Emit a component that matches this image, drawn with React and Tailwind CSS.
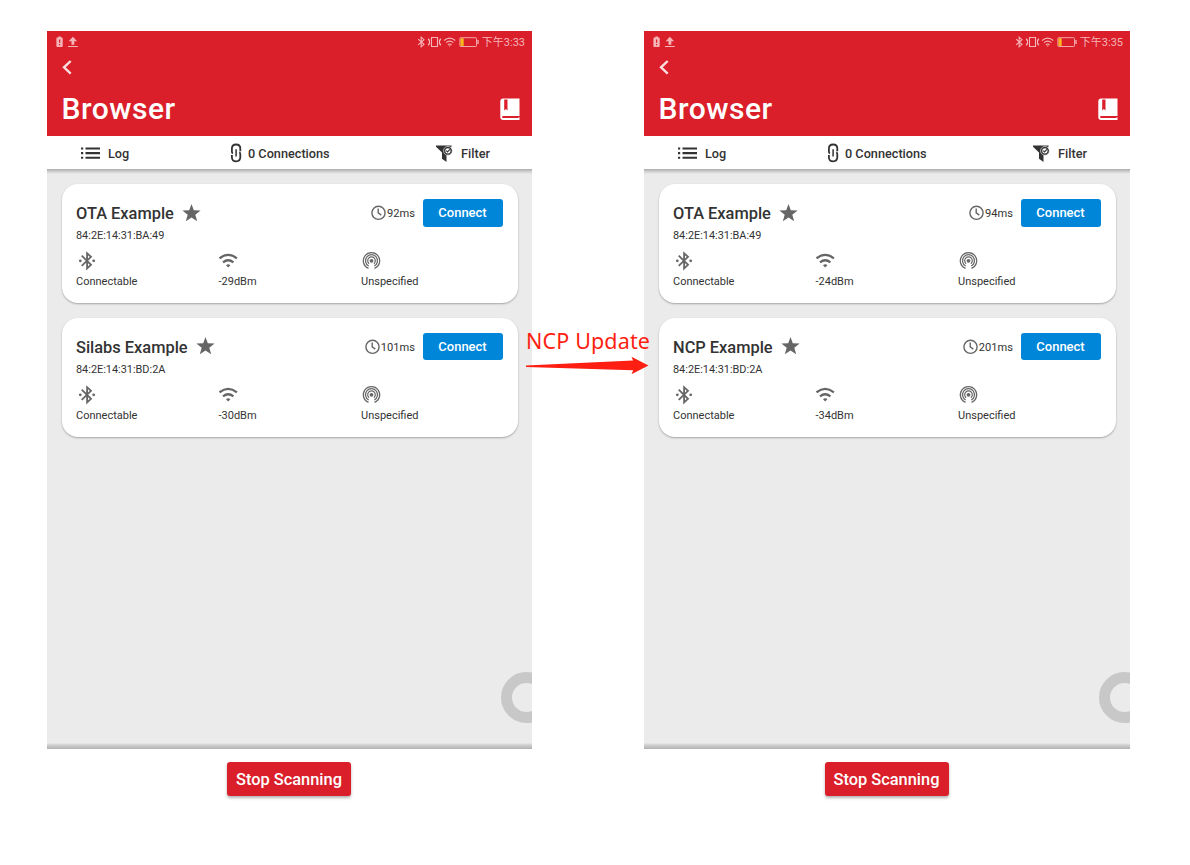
const phones = [
  {
    time: "下午3:33",
    width: "w-[485px]",
    devices: [
      { name: "OTA Example", mac: "84:2E:14:31:BA:49", rssi: "-29dBm", interval: "92ms" },
      { name: "Silabs Example", mac: "84:2E:14:31:BD:2A", rssi: "-30dBm", interval: "101ms" },
    ],
  },
  {
    time: "下午3:35",
    width: "w-[486px]",
    devices: [
      { name: "OTA Example", mac: "84:2E:14:31:BA:49", rssi: "-24dBm", interval: "94ms" },
      { name: "NCP Example", mac: "84:2E:14:31:BD:2A", rssi: "-34dBm", interval: "201ms" },
    ],
  },
];

function StatusBar({ time }) {
  return (
    <div className="flex h-[22px] items-center justify-between pl-[9px] pr-[7px] text-[#f5b5b8]">
      <svg width="24" height="12" viewBox="0 0 24 12" fill="currentColor">
        <path fillRule="evenodd" d="M1.300 1.500h1V.5h2.600v1h.9q.9 0 .9.900v7.600q0 .9-.9.900H1.300q-.9 0-.9-.900V2.400q0-.9.900-.9zM3 3.400v3.400h1.200V3.400zm0 4.500v1.300h1.200V7.900z" />
        <path d="M16.900.8l4.200 4.400h-2.800v3.600h-2.800V5.200h-2.800zM12 9.900h9.800v1.200H12z" />
      </svg>
      <div className="flex items-center">
        <svg width="62" height="12" viewBox="0 0 62 12" fill="none" stroke="currentColor" strokeWidth="1.100">
          <path d="M1.200 3.200L7 8.300 4.200 10.800V1.200L7 3.700 1.200 8.800" />
          <path d="M14.500 1.500h6v9h-6zM12.500 3.500v5M22.500 3.500v5M11.500 2.500v2M11.500 7.500v2M23.500 2.500v2M23.500 7.500v2" />
          <path d="M27.100 4.500q5.600-4.800 11.200 0M29 6.700q3.700-3.100 7.400 0M30.800 8.800q1.900-1.500 3.800 0" />
          <path d="M31.500 9.500h2.400l-1.200 1.300z" fill="currentColor" stroke="none" />
          <rect x="42.900" y="1.700" width="16.600" height="8.800" rx=".8" strokeWidth=".9" />
          <path d="M43.500 2.300h3.200v7.600h-3.200z" fill="#fbb81c" stroke="none" />
          <path d="M61 4v4" strokeWidth="1.300" />
        </svg>
        <span className="ml-[3px] whitespace-nowrap pt-[2px] font-[Roboto,'Noto_Sans_CJK_SC',sans-serif] text-[11px] leading-[14px]">{time}</span>
      </div>
    </div>
  );
}

function Header({ time }) {
  return (
    <header className="flex h-[105px] flex-col bg-[#da1f2a] text-white">
      <StatusBar time={time} />
      <svg className="ml-[14px] mt-[6px] shrink-0" width="12" height="16" viewBox="0 0 12 16" fill="none" stroke="#fbdfe0" strokeWidth="2.400">
        <path d="M9.700 2L3 8.300l6.700 6.400" />
      </svg>
      <div className="mt-[16px] flex items-center justify-between pl-[14.500px] pr-[12px]">
        <h1 className="text-[30px] font-medium leading-[36px] tracking-[0.500px]">Browser</h1>
        <svg width="20" height="23" viewBox="0 0 20 23" fill="white">
          <path fillRule="evenodd" d="M3.200.5H19.500V18H3.300q-1.300 0-1.300.9 0 1 1.300 1H18.500V19.200H19.500v2.700H3.300Q.3 21.900.3 19V3.500Q.3.500 3.200.5zM4.200 1.500V12.500L5.900 11 7.500 12.500V1.500z" />
        </svg>
      </div>
    </header>
  );
}

function Toolbar() {
  return (
    <nav className="flex h-[33px] items-center bg-white pt-px text-[12.700px] font-medium text-[#333]">
      <div className="ml-[34px] flex w-[149px] items-center gap-[7px]">
        <svg width="20" height="14" viewBox="0 0 20 14" stroke="#333" strokeWidth="2.100">
          <path d="M0 2.500h2.200M0 7.100h2.200M0 11.700h2.200M4.500 2.500H19M4.500 7.100H19M4.500 11.700H19" />
        </svg>
        <span className="pt-px leading-[17px]">Log</span>
      </div>
      <div className="flex w-[206px] items-center gap-[4px]">
        <svg width="14" height="20" viewBox="0 0 14 20" fill="none" stroke="#333" strokeWidth="1.800">
          <path d="M2.900 10.500Q1.900 10 1.900 8.500V5.500Q1.900 1.500 6.100 1.500T10.300 5.500V8.200" />
          <path d="M9.300 9.300Q10.300 9.800 10.300 11.300V14.300Q10.300 18.300 6.100 18.300T1.900 14.300V11.900" />
          <path d="M6.100 6.300v7.200" strokeWidth="1.500" />
        </svg>
        <span className="pt-px leading-[17px]">0 Connections</span>
      </div>
      <div className="flex items-center gap-[8px]">
        <svg width="17" height="17" viewBox="0 0 17 17">
          <path d="M0 .5h15.500v1.300L10.500 7v10L6 13.700V7.500L0 1.800z" fill="#333" />
          <circle cx="11.900" cy="5.800" r="4.400" fill="#333" stroke="white" strokeWidth=".6" />
          <circle cx="11.900" cy="5.800" r="2.600" fill="white" />
          <path d="M10.200 5.700l1.300 1.300 2.400-2.600" fill="none" stroke="#333" strokeWidth="1.200" />
        </svg>
        <span className="pt-px leading-[17px]">Filter</span>
      </div>
    </nav>
  );
}

function BluetoothIcon() {
  return (
    <svg width="22" height="20" viewBox="0 0 22 20" fill="none" stroke="#666" strokeWidth="1.800">
      <path d="M5.700 4.700l9.300 9.100-3.900 3.600V2.200L15 5.800l-9.300 9.100" />
      <circle cx="4.300" cy="9.800" r="1.400" fill="#666" stroke="none" />
      <circle cx="17.700" cy="9.800" r="1.400" fill="#666" stroke="none" />
    </svg>
  );
}

function WifiIcon() {
  return (
    <svg width="20" height="20" viewBox="0 0 20 20" fill="none" stroke="#666" strokeWidth="2.300">
      <path d="M.5 7.300Q9.200.5 17.900 7.300M4 11.300q5.200-4.100 10.400 0" />
      <path d="M7 14.200q2.200-2 4.400 0L9.200 16.500z" fill="#666" stroke="none" />
    </svg>
  );
}

function BeaconIcon() {
  return (
    <svg width="22" height="20" viewBox="0 0 22 20" fill="none" stroke="#666" strokeWidth="1.200">
      <path d="M7.500 17.400a8.200 8.200 0 1 1 6 0" />
      <path d="M7.700 15a6 6 0 1 1 5.600 0" />
      <path d="M8.100 12.700a3.800 3.800 0 1 1 4.800 0" />
      <circle cx="10.500" cy="9.800" r="1.900" fill="#666" stroke="none" />
    </svg>
  );
}

function DeviceCard({ device }) {
  return (
    <article className="flex h-[119px] flex-col rounded-[16px] bg-white pl-[14px] pr-[15px] pt-[15px] text-[#333] shadow-[0_1px_2px_rgba(0,0,0,0.3)]">
      <div className="flex h-[28px] items-center">
        <h2 className="whitespace-nowrap pt-[2px] text-[16.400px] font-medium leading-[20px]">{device.name}</h2>
        <svg className="ml-[8.500px]" width="19" height="19" viewBox="0 0 19 19" fill="#666">
          <path d="M9.500.1l2.300 6.200 6.800.2-5.300 4.200 1.900 6.600-5.700-3.700-5.700 3.700 1.900-6.600L.4 6.500l6.800-.2z" />
        </svg>
        <div className="ml-auto flex items-center">
          <svg width="16" height="16" viewBox="0 0 16 16" fill="none" stroke="#666" strokeWidth="1.400">
            <circle cx="8.500" cy="7.800" r="6.600" />
            <path d="M8.200 3.600v4.300l3.100 2.200" />
          </svg>
          <span className="ml-px pt-[2px] text-[11.100px] leading-[16px]">{device.interval}</span>
          <button className="ml-[7.500px] h-[27.500px] w-[80px] rounded-[3px] bg-[#0086d9] text-[13px] font-medium text-white">Connect</button>
        </div>
      </div>
      <p className="mt-[1px] text-[10.900px] leading-[16px]">{device.mac}</p>
      <div className="mt-[7px] grid grid-cols-[142.500px_142.500px_1fr] text-[11px] leading-[14px]">
        <div className="flex flex-col gap-[4px]"><BluetoothIcon /><span>Connectable</span></div>
        <div className="flex flex-col gap-[4px]"><WifiIcon /><span>{device.rssi}</span></div>
        <div className="flex flex-col gap-[4px]"><BeaconIcon /><span>Unspecified</span></div>
      </div>
    </article>
  );
}

function Phone({ phone }) {
  return (
    <section className={`flex h-[780px] shrink-0 flex-col overflow-hidden ${phone.width}`}>
      <Header time={phone.time} />
      <Toolbar />
      <div className="relative flex h-[580px] flex-col gap-[14.600px] overflow-hidden bg-[linear-gradient(to_bottom,#aaaaaa_0px,#c8c8c8_2px,#ebebeb_5px,#ebebeb_574px,#d0d0d0_576px,#b2b2b2_580px)] pl-[15px] pr-[14.500px] pt-[15px]">
        {phone.devices.map((device) => <DeviceCard key={device.mac} device={device} />)}
        <div className="absolute -right-[20px] top-[503px] size-[51px] rounded-full border-[11px] border-[#c8c8c8]" />
      </div>
      <footer className="flex justify-center pr-px pt-[13px]">
        <button className="h-[34px] w-[124px] rounded-[3px] bg-[#da1f2a] pt-[2px] text-[16.400px] font-medium text-white shadow-[0_2px_3px_rgba(0,0,0,0.3)]">Stop Scanning</button>
      </footer>
    </section>
  );
}

export default function App() {
  return (
    <main className="relative flex h-[865px] w-[1190px] gap-[112px] overflow-hidden bg-white pl-[47px] pt-[31px] font-[Roboto,sans-serif]">
      {phones.map((phone) => <Phone key={phone.time} phone={phone} />)}
      <div className="absolute left-[526px] top-[326px] w-[126px] text-[#ff1f12]">
        <p className="whitespace-nowrap font-['Noto_Sans',sans-serif] text-[21.500px] leading-[30px] tracking-[0.150px]">NCP Update</p>
        <svg width="124" height="20" viewBox="0 0 124 20" fill="currentColor">
          <path d="M0 9.600L107 4.500 105.500.8 122.500 9.600 105.500 18.200 107.200 14.200 0 11z" />
        </svg>
      </div>
    </main>
  );
}
